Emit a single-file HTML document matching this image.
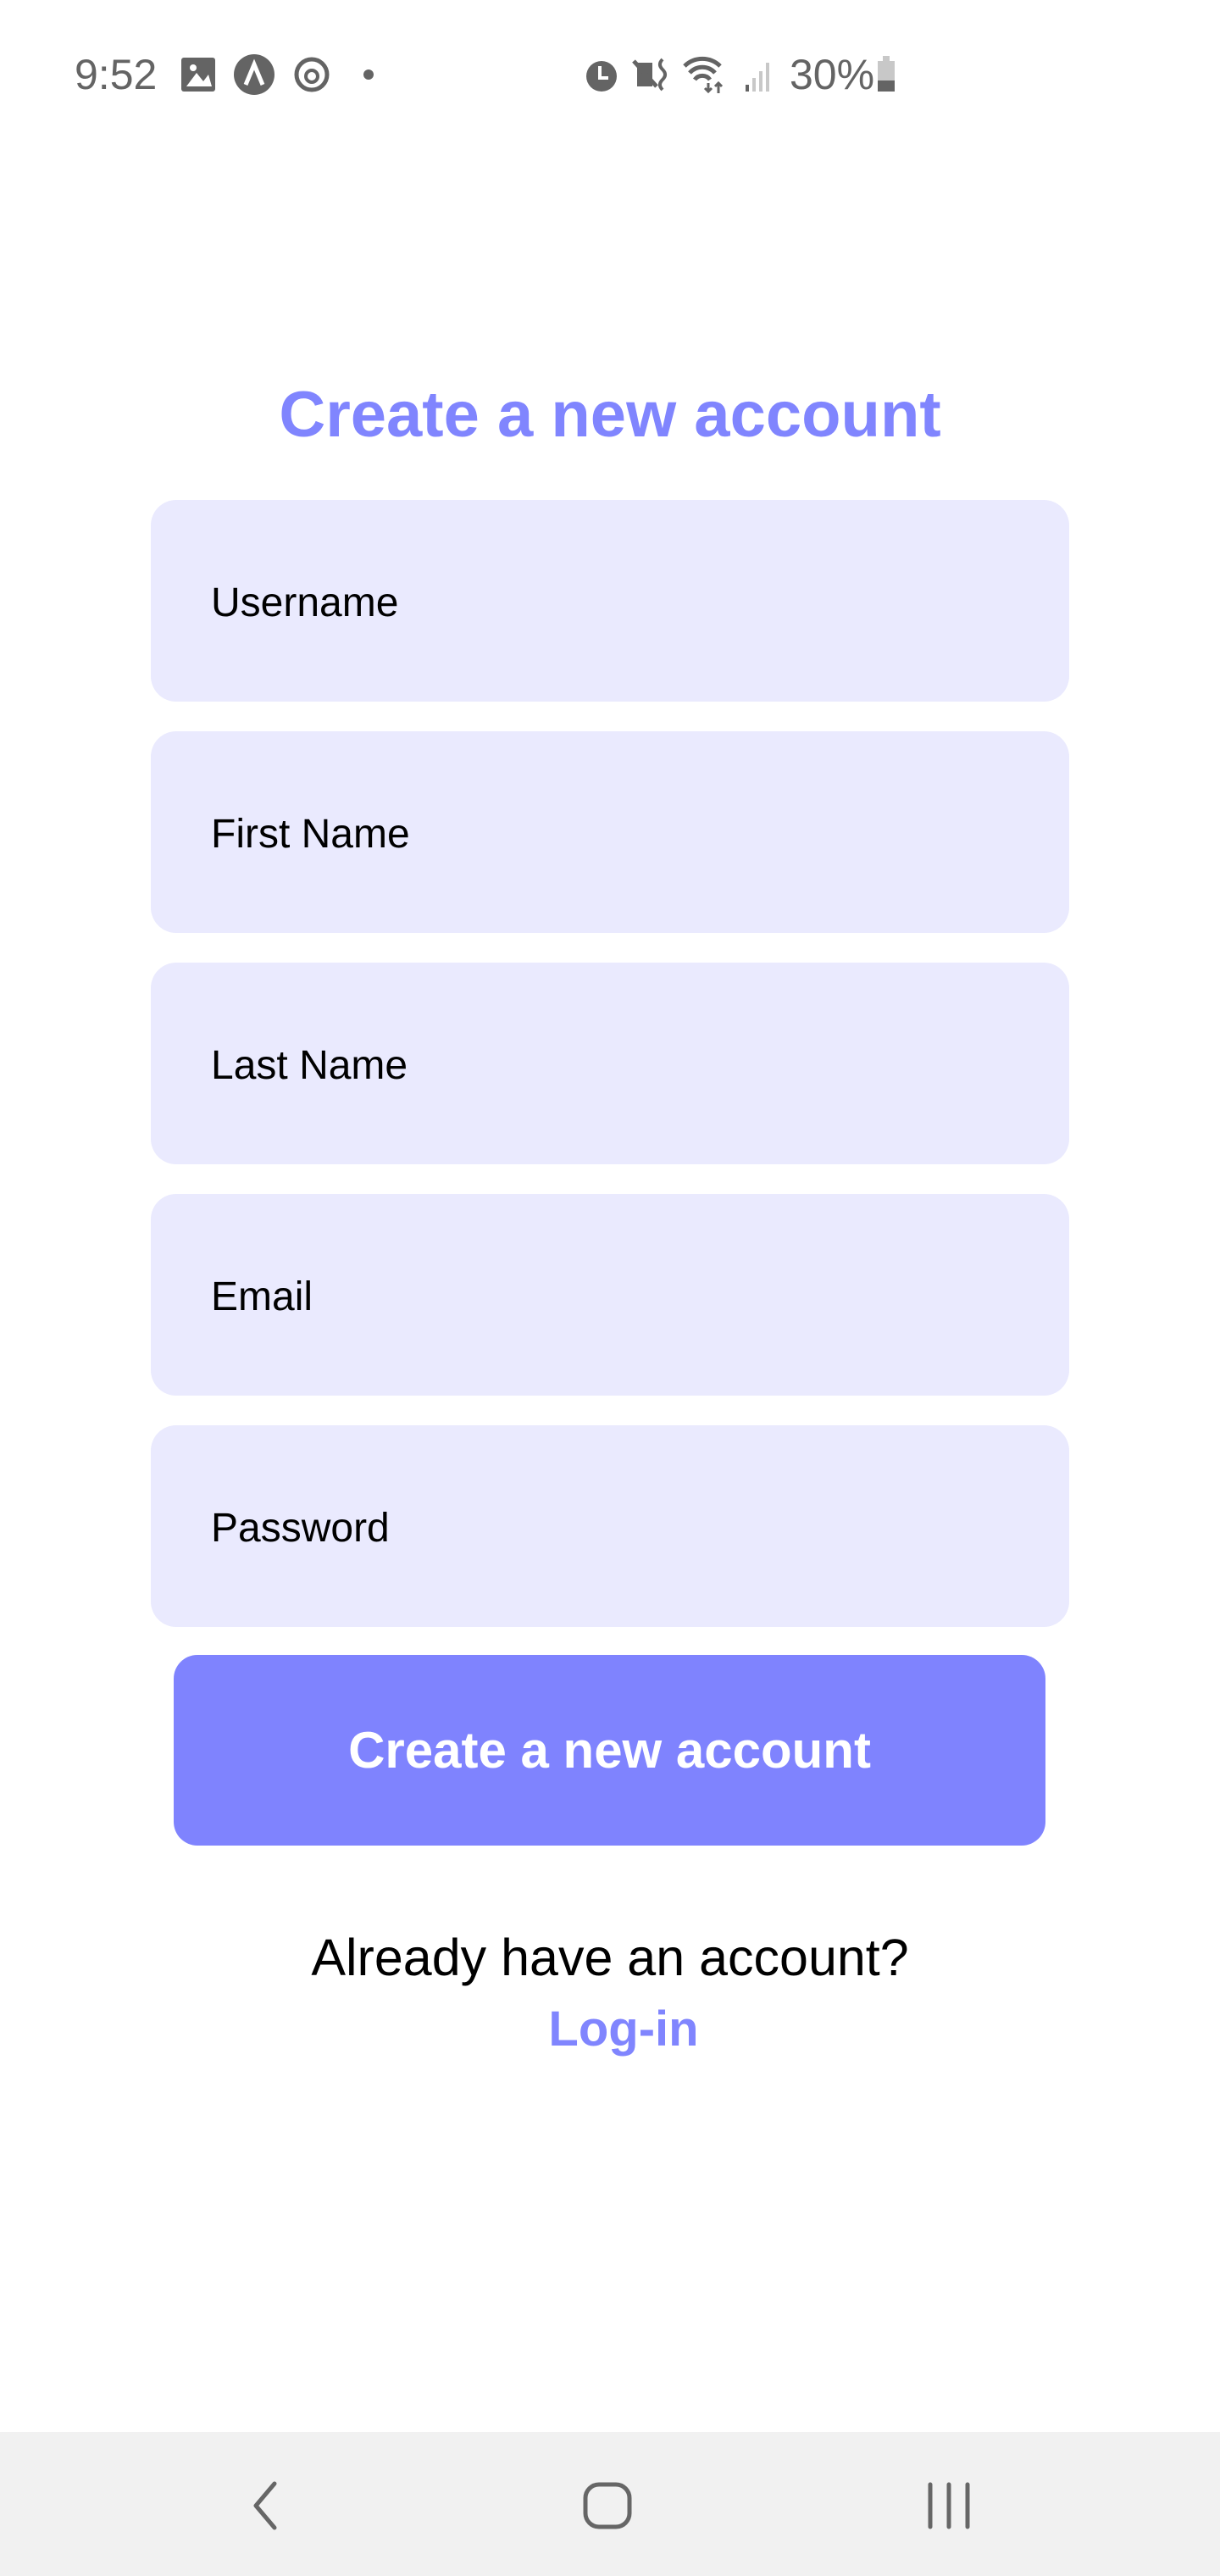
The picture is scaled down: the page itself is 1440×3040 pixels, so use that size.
<!DOCTYPE html>
<html><head><meta charset="utf-8"><style>
*{margin:0;padding:0;box-sizing:border-box}
body{width:1440px;height:3040px;background:#fff;position:relative;overflow:hidden;font-family:"Liberation Sans",Arial,sans-serif}
.abs{position:absolute}
.field{position:absolute;left:178px;width:1084px;height:238px;background:#eaeafe;border-radius:30px}
.field span{position:absolute;left:71px;top:98px;font-size:48px;color:#000;line-height:48px}
.sb{color:#646464;font-size:50px}
</style></head><body>
<div class="abs sb" style="left:88px;top:60px;line-height:56px">9:52</div>
<svg class="abs" style="left:0;top:0" width="1440" height="180" viewBox="0 0 1440 180">
<g fill="#646464">
<rect x="214" y="68" width="40" height="40" rx="3"/>
<path d="M220 102 L232 86 L240 96 L246 88 L250 102Z" fill="#fff"/>
<circle cx="228" cy="80" r="4" fill="#fff"/>
<circle cx="300" cy="88" r="24"/>
<path d="M290 100 L300 76 L310 100" stroke="#fff" stroke-width="5" fill="none"/>
<circle cx="368" cy="88" r="18" fill="none" stroke="#646464" stroke-width="5"/>
<circle cx="368" cy="90" r="7" fill="none" stroke="#646464" stroke-width="4"/>
<circle cx="435" cy="88" r="6"/>
<circle cx="710" cy="90" r="18"/>
<path d="M708 78 V92 H718" stroke="#fff" stroke-width="4" fill="none"/>
<rect x="752" y="74" width="18" height="28"/>
<path d="M748 72 L775 102" stroke="#646464" stroke-width="5"/>
<path d="M782 70 q-6 6 0 12 q6 6 0 12 q-6 6 0 12" stroke="#646464" stroke-width="4" fill="none"/>
<path d="M808 78 a30 30 0 0 1 42 0 M814 86 a20 20 0 0 1 30 0 M820 94 a11 11 0 0 1 18 0" stroke="#646464" stroke-width="5" fill="none"/>
<path d="M836 98 v10 M832 104 l4 4 4-4 M848 110 v-12 M844 102 l4-4 4 4" stroke="#646464" stroke-width="3" fill="none"/>
<rect x="880" y="100" width="4" height="8"/>
<rect x="888" y="92" width="4" height="16" fill="#c8c8c8"/><rect x="896" y="84" width="4" height="24" fill="#c8c8c8"/><rect x="904" y="74" width="4" height="34" fill="#c8c8c8"/>
<rect x="1042" y="66" width="8" height="6" fill="#c8c8c8"/>
<rect x="1036" y="72" width="20" height="36" fill="#c8c8c8"/>
<rect x="1036" y="95" width="20" height="13"/>
</g></svg>
<div class="abs sb" style="left:932px;top:60px;line-height:56px">30%</div>

<div class="abs" style="left:0;width:1440px;top:445px;text-align:center;font-size:76px;font-weight:bold;color:#8085fe;line-height:90px">Create a new account</div>

<div class="field" style="top:590px"><span>Username</span></div>
<div class="field" style="top:863px"><span>First Name</span></div>
<div class="field" style="top:1136px"><span>Last Name</span></div>
<div class="field" style="top:1409px"><span>Email</span></div>
<div class="field" style="top:1682px"><span>Password</span></div>

<div class="abs" style="left:205px;top:1953px;width:1029px;height:225px;background:#7f83fe;border-radius:28px;color:#fff;font-weight:bold;font-size:60px;text-align:center;line-height:225px">Create a new account</div>

<div class="abs" style="left:0;width:1440px;top:2277px;text-align:center;font-size:61px;line-height:66px;color:#000">Already have an account?</div>
<div class="abs" style="left:16px;width:1440px;top:2365px;text-align:center;font-size:58px;font-weight:bold;line-height:60px;color:#8085fe">Log-in</div>

<div class="abs" style="left:0;top:2870px;width:1440px;height:170px;background:#f1f1f1"></div>
<svg class="abs" style="left:0;top:2870px" width="1440" height="170">
<g stroke="#666" stroke-width="5" fill="none" stroke-linecap="round" stroke-linejoin="round">
<path d="M324 61 L302 87 L324 113"/>
<rect x="691" y="62" width="52" height="50" rx="16"/>
<path d="M1098 62 V112 M1120 62 V112 M1142 62 V112"/>
</g></svg>
</body></html>
